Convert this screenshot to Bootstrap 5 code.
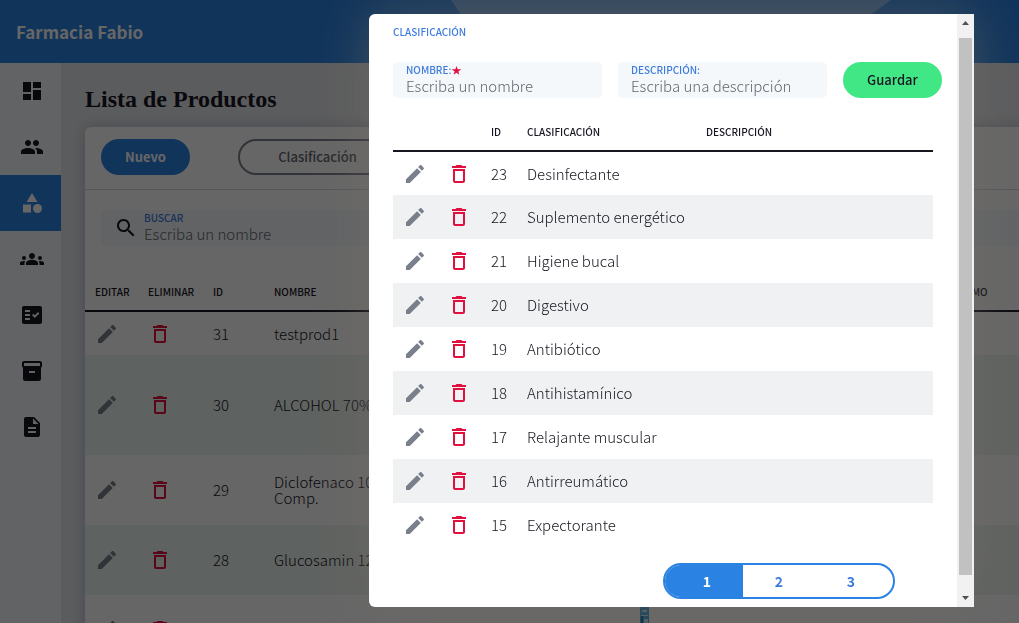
<!DOCTYPE html>
<html lang="es">
<head>
<meta charset="utf-8">
<meta name="viewport" content="width=device-width, initial-scale=1">
<title>Farmacia Fabio</title>
<link href="https://cdn.jsdelivr.net/npm/bootstrap@5.3.0/dist/css/bootstrap.min.css" rel="stylesheet">
<style>
  :root { --blue: #2a82e2; --ink: #17151f; --label: #3d7bdc; --soft: #f4f8fb; --danger-red: #e0103f; --steel: #79808c; }
  body { font-family: "Noto Sans CJK SC", sans-serif; font-weight: 300; font-size: 15px; line-height: 16px; color: var(--ink); background: #e4e6ea; }
  svg { display: block; fill: currentColor; }
  .topbar { height: 63px; background: var(--blue); color: #fff; }
  .topbar .navbar-brand { font-size: 17px; font-weight: 700; line-height: 22px; color: #fff; }
  .glow { width: 440px; right: 128px; background: rgba(255,255,255,.34); clip-path: polygon(0 0, 100% 0, 80% 100%, 10% 100%); }
  .sidebar { width: 61px; background: var(--soft); }
  .sidebar a { height: 56px; padding-left: 20px; color: var(--ink); }
  .sidebar a.active { background: var(--blue); color: #fff; }
  .content-area { padding: 24px 0 0 24px; min-width: 0; }
  h1 { font: 700 24px/24px "Liberation Serif", serif; margin-bottom: 16px; }
  .panel { width: 1000px; background: #fff; border-radius: 6px; box-shadow: 0 0 14px rgba(20,20,60,.22); }
  .tools { height: 63px; padding: 12px 16px; gap: 48px; border-bottom: 1px solid #d5d8dc; }
  .pill { height: 36px; border-radius: 18px; border: 0; font-size: 13px; font-weight: 500; line-height: 16px; }
  .pill-new { width: 89px; background: var(--blue); color: #fff; font-weight: 700; }
  .pill-outline { width: 159px; border: 2px solid var(--steel); background: transparent; color: #63666e; }
  .pill-save { width: 99px; background: #41e785; color: var(--ink); }
  .field { height: 36px; padding: 2px 13px; background: var(--soft); border-radius: 5px; }
  .caps { font-size: 10px; font-weight: 500; line-height: 12px; color: var(--label); }
  .field .caps { display: block; }
  .field input { display: block; width: 100%; height: 20px; padding: 0; border: 0; background: transparent; font-weight: 300; font-size: 15px; line-height: 20px; outline: 0; }
  .field input::placeholder { color: #62676f; opacity: 1; }
  .search { margin: 20px 16px; gap: 6px; }
  .grid { table-layout: fixed; width: 100%; border-collapse: collapse; }
  .grid th { font-size: 10px; font-weight: 500; line-height: 12px; border-bottom: 2px solid var(--ink); }
  .grid td, .grid th { padding: 0 10px; vertical-align: middle; }
  .grid .act { display: block; border: 0; padding: 0; background: transparent; }
  .edit { color: var(--steel); }
  .del { color: var(--danger-red); }
  .products th { height: 45px; padding-top: 7px; }
  .products tr:nth-child(even) td { background: #ecf4ef; }
  .h44 td { height: 44px; } .h70 td { height: 70px; } .h100 td { height: 100px; }
  .backdrop-layer { background: rgba(0,0,0,.6); padding: 14px 45px 16px; }
  .dialog { width: 605px; background: #fff; border-radius: 6px 0 0 6px; box-shadow: 0 0 56px rgba(118,112,106,.5); }
  .dialog-body { padding: 12px 15px 8px 24px; min-width: 0; }
  .dialog-body h2 { margin: 0 0 24px; }
  .inner { margin-right: 9px; }
  .grid.classes th { height: 53px; padding: 16px 0 0; }
  .grid.classes td { padding: 0; }
  .classes td .act { margin: 0 auto; }
  .grid.classes .num { padding-left: 10px; }
  .classes tr:nth-child(even) td { background: #f0f1f3; }
  .pager { width: 232px; height: 36px; margin: 16px 0 0 50%; padding: 0 6px; border: 2px solid var(--blue); border-radius: 18px; overflow: hidden; }
  .pager button { flex: 0 0 72px; border: 0; padding: 0; background: transparent; color: var(--label); font-size: 14px; font-weight: 700; }
  .pager .current { flex-basis: 78px; margin-left: -6px; padding-left: 6px; background: var(--blue); color: #fff; }
  .track { width: 17px; background: #f1f1f1; color: #505050; padding: 7px 0; }
  .thumb { width: 13px; background: #c1c1c1; margin: 13px 0 21px; }
</style>
</head>
<body class="vh-100 overflow-hidden">
<svg width="0" height="0" class="position-absolute" aria-hidden="true">
  <symbol id="pen" viewBox="0 0 24 24"><path d="M3 17.25V21h3.75L17.81 9.94l-3.75-3.75L3 17.25zM20.71 7.04c.39-.39.39-1.02 0-1.41l-2.34-2.34c-.39-.39-1.02-.39-1.41 0l-1.83 1.83 3.75 3.75 1.83-1.83z"/></symbol>
  <symbol id="bin" viewBox="0 0 24 24"><path d="M16 9v10H8V9h8m-1.5-6h-5l-1 1H5v2h14V4h-3.5l-1-1zM18 7H6v12c0 1.1.9 2 2 2h8c1.1 0 2-.9 2-2V7z"/></symbol>
</svg>

<div class="d-flex flex-column h-100">
  <header class="topbar navbar p-0 px-3 position-relative flex-shrink-0">
    <div class="glow position-absolute top-0 h-100"></div>
    <a class="navbar-brand p-0 m-0" href="#">Farmacia Fabio</a>
  </header>
  <div class="d-flex flex-grow-1 overflow-hidden">
    <nav class="sidebar d-flex flex-column flex-shrink-0" aria-label="Menú">
      <a href="#" class="d-flex align-items-center" aria-label="Panel"><svg width="24" height="24" viewBox="0 0 24 24"><path d="M3 13h8V3H3v10zm0 8h8v-6H3v6zm10 0h8V11h-8v10zm0-18v6h8V3h-8z"/></svg></a>
      <a href="#" class="d-flex align-items-center" aria-label="Usuarios"><svg width="24" height="24" viewBox="0 0 24 24"><path d="M16 11c1.66 0 2.99-1.34 2.99-3S17.66 5 16 5s-3 1.34-3 3 1.34 3 3 3zm-8 0c1.66 0 2.99-1.34 2.99-3S9.66 5 8 5 5 6.34 5 8s1.34 3 3 3zm0 2c-2.33 0-7 1.17-7 3.5V19h14v-2.5c0-2.33-4.67-3.5-7-3.5zm8 0c-.29 0-.62.02-.97.05 1.16.84 1.97 1.97 1.97 3.45V19h6v-2.5c0-2.33-4.67-3.5-7-3.5z"/></svg></a>
      <a href="#" class="active d-flex align-items-center" aria-label="Productos"><svg width="24" height="24" viewBox="0 0 24 24"><path d="M12 2l-5.5 9h11zM3 13.5h8v8H3z"/><circle cx="17.5" cy="17.5" r="4.5"/></svg></a>
      <a href="#" class="d-flex align-items-center" aria-label="Grupos"><svg width="24" height="24" viewBox="0 0 24 24"><path d="M12 12.75c1.63 0 3.07.39 4.24.9 1.08.48 1.76 1.56 1.76 2.73V18H6v-1.61c0-1.18.68-2.26 1.76-2.73 1.17-.52 2.61-.91 4.24-.91zM4 13c1.1 0 2-.9 2-2s-.9-2-2-2-2 .9-2 2 .9 2 2 2zm1.13 1.1c-.37-.06-.74-.1-1.13-.1-.99 0-1.93.21-2.78.58C.48 14.9 0 15.62 0 16.43V18h4.5v-1.61c0-.83.23-1.61.63-2.29zM20 13c1.1 0 2-.9 2-2s-.9-2-2-2-2 .9-2 2 .9 2 2 2zm4 3.43c0-.81-.48-1.53-1.22-1.85-.85-.37-1.79-.58-2.78-.58-.39 0-.76.04-1.13.1.4.68.63 1.46.63 2.29V18H24v-1.57zM12 6c1.66 0 3 1.34 3 3s-1.34 3-3 3-3-1.34-3-3 1.34-3 3-3z"/></svg></a>
      <a href="#" class="d-flex align-items-center" aria-label="Pedidos"><svg width="24" height="24" viewBox="0 0 24 24"><path fill-rule="evenodd" d="M20 3H4c-1.1 0-2 .9-2 2v14c0 1.1.9 2 2 2h16c1.1 0 2-.9 2-2V5c0-1.1-.9-2-2-2zM10 17H5v-2h5v2zm0-4H5v-2h5v2zm0-4H5V7h5v2zm4.82 6L12 12.16l1.41-1.41 1.41 1.42L17.99 9l1.42 1.42L14.82 15z"/></svg></a>
      <a href="#" class="d-flex align-items-center" aria-label="Inventario"><svg width="24" height="24" viewBox="0 0 24 24"><path d="M20 2H4c-1 0-2 .9-2 2v3.01c0 .72.43 1.34 1 1.69V20c0 1.1 1.1 2 2 2h14c.9 0 2-.9 2-2V8.7c.57-.35 1-.97 1-1.69V4c0-1.1-1-2-2-2zm-5 12H9v-2h6v2zm5-7H4V4h16v3z"/></svg></a>
      <a href="#" class="d-flex align-items-center" aria-label="Reportes"><svg width="24" height="24" viewBox="0 0 24 24"><path d="M14 2H6c-1.1 0-1.99.9-1.99 2L4 20c0 1.1.89 2 1.99 2H18c1.1 0 2-.9 2-2V8l-6-6zm2 16H8v-2h8v2zm0-4H8v-2h8v2zm-3-5V3.5L18.5 9H13z"/></svg></a>
    </nav>
    <main class="content-area flex-grow-1 overflow-hidden">
      <h1>Lista de Productos</h1>
      <section class="panel">
        <div class="tools d-flex">
          <button type="button" class="pill pill-new">Nuevo</button>
          <button type="button" class="pill pill-outline">Clasificación</button>
        </div>
        <div class="search field d-flex align-items-center">
          <svg width="24" height="24" viewBox="0 0 24 24"><path d="M15.5 14h-.79l-.28-.27C15.41 12.59 16 11.11 16 9.5 16 5.91 13.09 3 9.5 3S3 5.91 3 9.5 5.91 16 9.5 16c1.61 0 3.09-.59 4.23-1.57l.27.28v.79l5 4.99L20.49 19l-4.99-5zm-6 0C7.01 14 5 11.99 5 9.5S7.01 5 9.5 5 14 7.01 14 9.5 11.99 14 9.5 14z"/></svg>
          <div><label class="caps" for="buscar">BUSCAR</label><input id="buscar" type="search" placeholder="Escriba un nombre"></div>
        </div>
        <table class="grid products">
          <colgroup><col style="width:53px"><col style="width:65px"><col style="width:61px"><col style="width:395px"><col style="width:281px"><col></colgroup>
          <thead><tr><th>EDITAR</th><th>ELIMINAR</th><th>ID</th><th>NOMBRE</th><th></th><th>MÍNIMO</th></tr></thead>
          <tbody id="products"></tbody>
        </table>
      </section>
    </main>
  </div>
</div>

<div class="backdrop-layer position-fixed top-0 bottom-0 start-0 end-0 d-flex justify-content-end">
  <div class="dialog d-flex" role="dialog" aria-modal="true" aria-labelledby="dlg">
    <div class="dialog-body flex-grow-1">
      <h2 class="caps" id="dlg">CLASIFICACIÓN</h2>
      <form class="d-flex gap-3">
        <div class="field flex-fill"><label class="caps" for="nombre">NOMBRE:<span class="del fw-bold">★</span></label><input id="nombre" type="text" placeholder="Escriba un nombre"></div>
        <div class="field flex-fill"><label class="caps" for="desc">DESCRIPCIÓN:</label><input id="desc" type="text" placeholder="Escriba una descripción"></div>
        <button type="button" class="pill pill-save flex-shrink-0">Guardar</button>
      </form>
      <div class="inner">
        <table class="grid classes">
          <colgroup><col style="width:44px"><col style="width:44px"><col style="width:46px"><col style="width:179px"><col></colgroup>
          <thead><tr><th></th><th></th><th class="num">ID</th><th>CLASIFICACIÓN</th><th>DESCRIPCIÓN</th></tr></thead>
          <tbody id="classes"></tbody>
        </table>
        <nav class="pager d-flex" aria-label="Páginas">
          <button type="button" class="current">1</button><button type="button">2</button><button type="button">3</button>
        </nav>
      </div>
    </div>
    <div class="track d-flex flex-column align-items-center flex-shrink-0" aria-hidden="true">
      <svg width="7" height="4" viewBox="0 0 7 4"><path d="M3.5 0L7 4H0z"/></svg>
      <div class="thumb flex-grow-1"></div>
      <svg width="7" height="4" viewBox="0 0 7 4"><path d="M0 0h7L3.5 4z"/></svg>
    </div>
  </div>
</div>

<script src="https://cdn.jsdelivr.net/npm/bootstrap@5.3.0/dist/js/bootstrap.bundle.min.js"></script>
<script>
  const action = (kind, icon, label) => `<button type="button" class="act ${kind}" aria-label="${label}"><svg width="24" height="24"><use href="#${icon}"/></svg></button>`;
  const edit = action('edit', 'pen', 'Editar'), del = action('del', 'bin', 'Eliminar');
  const box = '<svg width="9" height="48" viewBox="0 0 9 48"><path fill="#36a3d9" d="M0 0h9v48H0z"/><path fill="#bfe6f5" d="M2 4h5v2H2zM1 9h7v1H1zM4 13h4v9H4z"/><path fill="#14639c" d="M1 10h2v12H1z"/></svg>';
  const products = [[31, 'testprod1', 'h44', ''], [30, 'ALCOHOL 70%', 'h100', ''], [29, 'Diclofenaco 10<br>Comp.', 'h70', ''], [28, 'Glucosamin 12', 'h70', ''], ['', '', 'h70', box]];
  document.getElementById('products').innerHTML = products.map(([id, name, h, pic]) =>
    `<tr class="${h}"><td>${edit}</td><td>${del}</td><td>${id}</td><td><div class="d-flex"><span>${name}</span>${pic && `<span class="ms-auto">${pic}</span>`}</div></td><td></td><td></td></tr>`).join('');
  const names = ['Desinfectante', 'Suplemento energético', 'Higiene bucal', 'Digestivo', 'Antibiótico', 'Antihistamínico', 'Relajante muscular', 'Antirreumático', 'Expectorante'];
  document.getElementById('classes').innerHTML = names.map((n, i) =>
    `<tr class="h44"><td>${edit}</td><td>${del}</td><td class="num">${23 - i}</td><td>${n}</td><td></td></tr>`).join('');
</script>
</body>
</html>
